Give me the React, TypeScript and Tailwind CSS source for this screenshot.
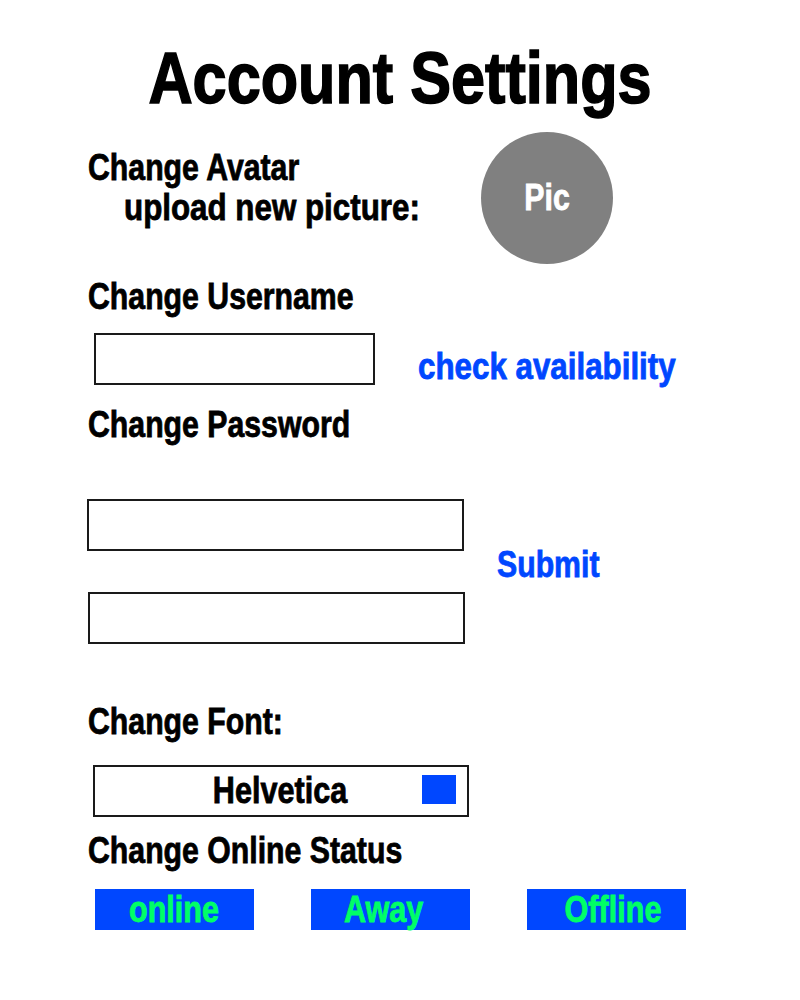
import React from "react";

const font = { fontFamily: '"Liberation Sans", Arial, sans-serif' };

// 좁은 굵은 글꼴 흉내: 가로로 눌러서 보여줌
function Label({ children, className = "", wide }: { children: React.ReactNode; className?: string; wide?: boolean }) {
  return (
    <div className={`text-[36px] leading-[36px] whitespace-nowrap ${className}`}>
      <span className={`inline-block origin-left ${wide ? "scale-x-[0.87]" : "scale-x-[0.84]"} [-webkit-text-stroke:0.8px]`}>
        {children}
      </span>
    </div>
  );
}

function Field({ className }: { className: string }) {
  return <div className={`h-[52px] border-2 border-[#1a1a1a] bg-white ${className}`} />;
}

const statuses = [
  { label: "online", shift: "-ml-[2px]" },
  { label: "Away", shift: "-ml-[14px]" },
  { label: "Offline", shift: "ml-[12px]" },
];

export default function App() {
  return (
    <div className="w-[800px] h-[1000px] bg-white text-black font-bold overflow-hidden" style={font}>
      {/* 타이틀 */}
      <h1 className="pt-[42px] text-center text-[72px] leading-[72px] whitespace-nowrap">
        <span className="inline-block scale-x-[0.85] [-webkit-text-stroke:1.6px]">Account Settings</span>
      </h1>

      <div className="pl-[88px]">
        {/* 아바타 */}
        <div className="flex items-start mt-[18px] h-[132px]">
          <div className="w-[393px] pt-[18px]">
            <Label>Change Avatar</Label>
            <Label wide className="mt-[4px] pl-[36px]">upload new picture:</Label>
          </div>
          <div className="w-[132px] h-[132px] rounded-full bg-[#808080] text-white flex items-center justify-center text-[36px] leading-[36px]">
            <span className="inline-block scale-x-[0.84] [-webkit-text-stroke:0.8px]">Pic</span>
          </div>
        </div>

        {/* 사용자 이름 */}
        <Label className="mt-[15px]">Change Username</Label>
        <div className="flex items-start mt-[18px]">
          <Field className="ml-[6px] w-[281px]" />
          <Label wide className="ml-[43px] mt-[16px] text-[#0047ff]">check availability</Label>
        </div>

        {/* 비밀번호 */}
        <Label className="mt-[22px]">Change Password</Label>
        <div className="flex items-start mt-[56px]">
          <div className="flex flex-col gap-[41px]">
            <Field className="-ml-[1px] w-[377px]" />
            <Field className="w-[377px]" />
          </div>
          <Label className="ml-[32px] mt-[48px] text-[#0047ff]">Submit</Label>
        </div>

        {/* 폰트 */}
        <Label className="mt-[60px]">Change Font:</Label>
        <div className="ml-[5px] mt-[25px] w-[376px] h-[52px] border-2 border-[#1a1a1a] flex items-center">
          <div className="flex-1 text-center text-[36px] leading-[36px] pl-[44px] -mt-[1px]">
            <span className="inline-block scale-x-[0.85] [-webkit-text-stroke:0.8px]">Helvetica</span>
          </div>
          <span className="w-[34px] h-[29px] bg-[#0047ff] mr-[11px] -mt-[4px]" />
        </div>

        {/* 온라인 상태 */}
        <Label className="mt-[16px]">Change Online Status</Label>
        <div className="flex gap-[57px] ml-[7px] mt-[20px]">
          {statuses.map((s) => (
            <div
              key={s.label}
              className="w-[159px] h-[41px] bg-[#0047ff] text-[#00ff66] text-[36px] leading-[41px] text-center whitespace-nowrap"
            >
              <span className={`inline-block scale-x-[0.85] [-webkit-text-stroke:0.8px] ${s.shift}`}>{s.label}</span>
            </div>
          ))}
        </div>
      </div>
    </div>
  );
}
